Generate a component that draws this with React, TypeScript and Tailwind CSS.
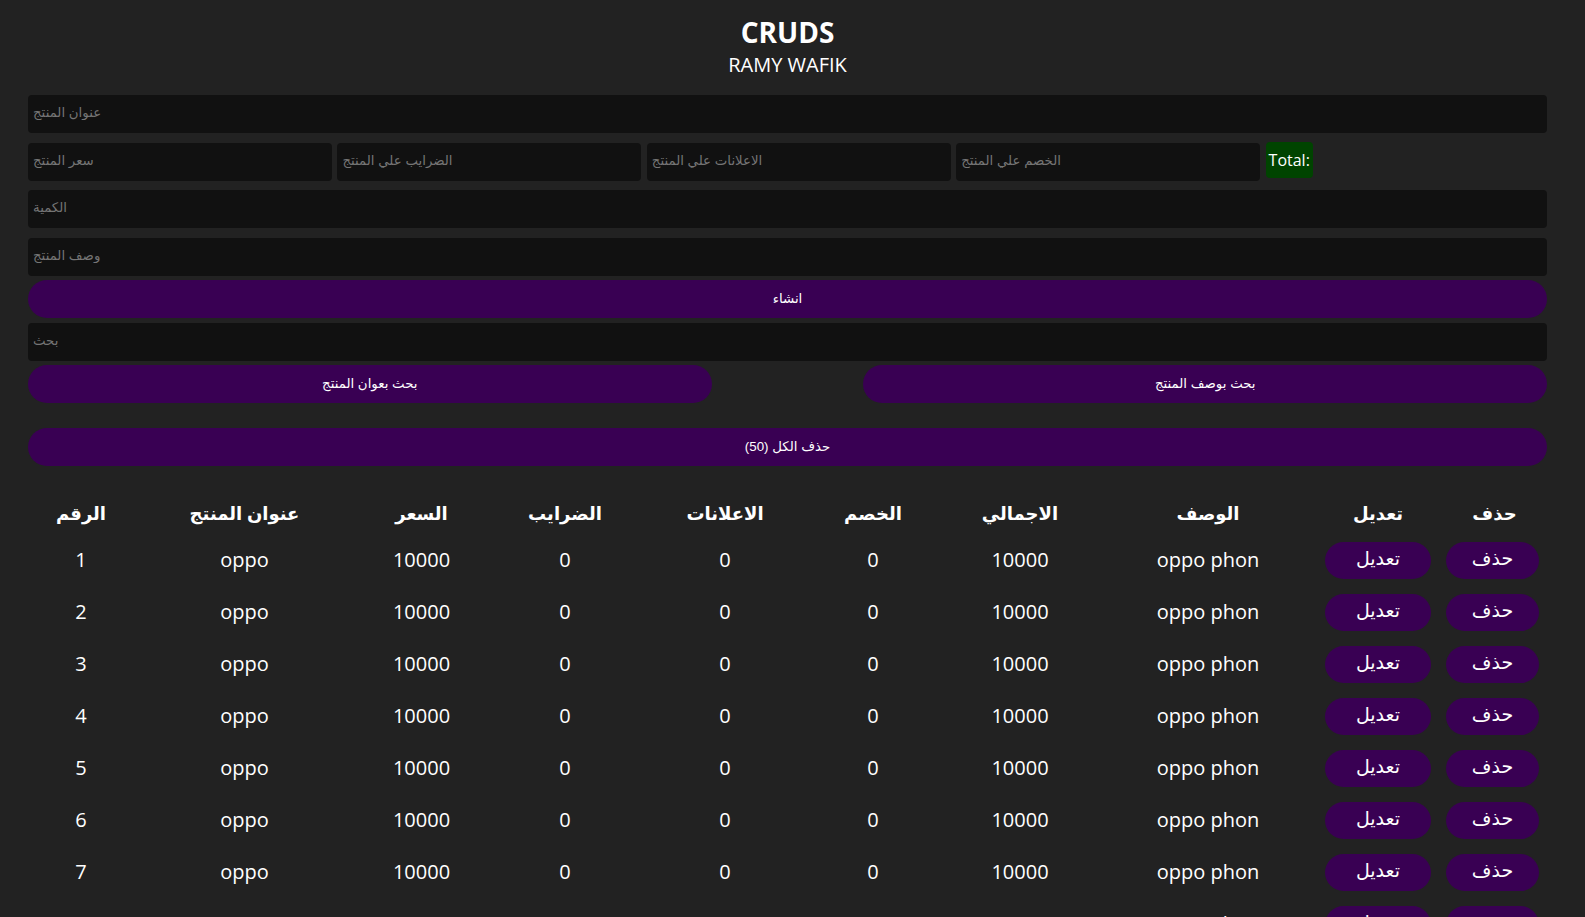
import React from 'react';

const inputCls =
  'block h-[38px] w-full rounded-[4px] bg-[#111] px-[5px] pb-[3px] text-[13.33px] text-white outline-none placeholder:text-[#757575]';
const btnCls =
  'block h-[38px] w-full rounded-full bg-[#390053] text-[13.33px] text-white cursor-pointer';

const headers = ['الرقم', 'عنوان المنتج', 'السعر', 'الضرايب', 'الاعلانات', 'الخصم', 'الاجمالي', 'الوصف', 'تعديل', 'حذف'];
const colWidths = ['w-[106px]', 'w-[221px]', 'w-[133px]', 'w-[154px]', 'w-[166px]', 'w-[130px]', 'w-[164px]', 'w-[212px]', 'w-[128px]', 'w-[105px]'];

const products = Array.from({ length: 50 }, (_, i) => ({
  id: i + 1,
  title: 'oppo',
  price: 10000,
  taxes: 0,
  ads: 0,
  discount: 0,
  total: 10000,
  desc: 'oppo phon',
}));

const App: React.FC = () => {
  return (
    <div
      className="min-h-screen bg-[#222] text-white pl-[28px] pr-[38px] pt-[15px] pb-10"
      style={{ fontFamily: '"Open Sans", "DejaVu Sans", sans-serif' }}
    >
      {/* header */}
      <div className="text-center">
        <h2 className="text-[28px] leading-[34px] font-bold">CRUDS</h2>
        <p className="mt-[4px] text-[20px] leading-[24px]">RAMY WAFIK</p>
      </div>

      {/* inputs */}
      <div style={{ fontFamily: '"Liberation Sans", "DejaVu Sans", sans-serif' }}>
        <input className={`${inputCls} mt-[18px]`} placeholder="عنوان المنتج" />

        <div className="mt-[10px] flex items-start gap-[5.6px]">
          <input className={`${inputCls} !w-[20%] shrink-0`} placeholder="سعر المنتج" />
          <input className={`${inputCls} !w-[20%] shrink-0`} placeholder="الضرايب علي المنتج" />
          <input className={`${inputCls} !w-[20%] shrink-0`} placeholder="الاعلانات علي المنتج" />
          <input className={`${inputCls} !w-[20%] shrink-0`} placeholder="الخصم علي المنتج" />
          <span
            className="-mt-[1px] flex h-[36px] items-center rounded-[4px] bg-[#004400] px-[3px] text-[16px] text-white"
            style={{ fontFamily: '"Open Sans", sans-serif' }}
          >
            Total:
          </span>
        </div>

        <input className={`${inputCls} mt-[9px]`} placeholder="الكمية" />
        <input className={`${inputCls} mt-[10px]`} placeholder="وصف المنتج" />

        <button className={`${btnCls} mt-[4px]`}>انشاء</button>

        <input className={`${inputCls} mt-[5px]`} placeholder="بحث" />

        <div className="mt-[4px] flex justify-between">
          <button className={`${btnCls} !w-[45%]`}>بحث بعوان المنتج</button>
          <button className={`${btnCls} !w-[45%]`}>بحث بوصف المنتج</button>
        </div>

        <button className={`${btnCls} mt-[25px]`}>حذف الكل (50)</button>
      </div>

      {/* table */}
      <table className="mt-[26px] w-full table-fixed text-center text-[20px]">
        <thead>
          <tr className="h-[42px]">
            {headers.map((h, i) => (
              <th key={h} className={`${colWidths[i]} text-[18px] font-bold`}>
                {h}
              </th>
            ))}
          </tr>
        </thead>
        <tbody>
          {products.map((p) => (
            <tr key={p.id} className="h-[52px]">
              <td>{p.id}</td>
              <td>{p.title}</td>
              <td>{p.price}</td>
              <td>{p.taxes}</td>
              <td>{p.ads}</td>
              <td>{p.discount}</td>
              <td>{p.total}</td>
              <td>{p.desc}</td>
              <td>
                <button className="mx-auto block h-[37px] w-[106px] rounded-full bg-[#390053] pb-[3px] text-[19px] text-white">
                  تعديل
                </button>
              </td>
              <td>
                <button className="ml-[4px] block h-[37px] w-[93px] rounded-full bg-[#390053] pb-[3px] text-[19px] text-white">
                  حذف
                </button>
              </td>
            </tr>
          ))}
        </tbody>
      </table>
    </div>
  );
};

export default App;
